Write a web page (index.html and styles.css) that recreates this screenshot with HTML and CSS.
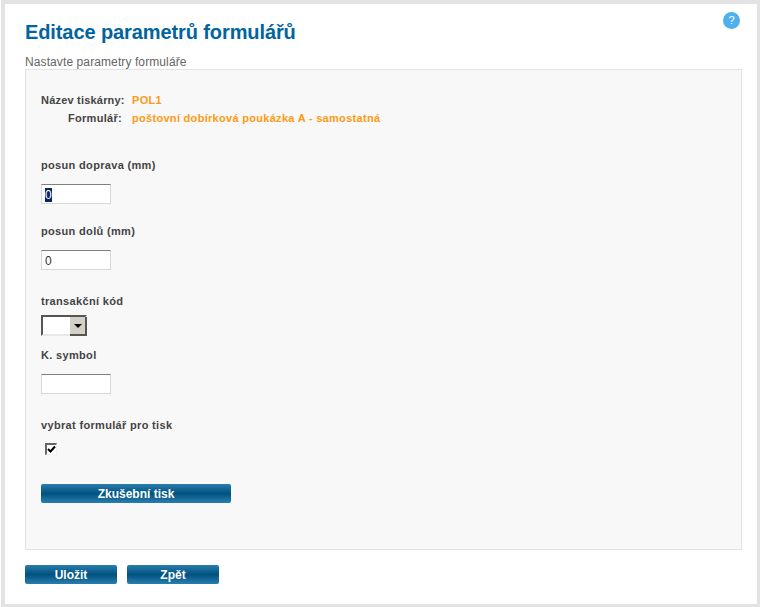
FILE: index.html
```html
<!DOCTYPE html>
<html>
<head>
    <title>Editace parametrů formulářů</title>
    <link rel="stylesheet" href="styles.css">
</head>
<body>
    <div class="frame">
        <div class="help">?</div>
        <h1>Editace parametrů formulářů</h1>
        <p class="subtitle">Nastavte parametry formuláře</p>

        <form class="panel">
            <div class="info">
                <div class="info-label">Název tiskárny:</div>
                <div class="info-value">POL1</div>
                <div class="info-label info-form">Formulář:</div>
                <div class="info-value">poštovní dobírková poukázka A - samostatná</div>
            </div>

            <label class="field-label first">posun doprava (mm)</label>
            <div class="input"><span class="selected">0</span></div>

            <label class="field-label">posun dolů (mm)</label>
            <div class="input">0</div>

            <label class="field-label code">transakční kód</label>
            <div class="select">
                <span class="select-btn"><span class="arrow"></span></span>
            </div>

            <label class="field-label symbol">K. symbol</label>
            <div class="input"></div>

            <label class="field-label last">vybrat formulář pro tisk</label>
            <div class="check">
                <svg width="9" height="9" viewBox="0 0 9 9"><path d="M1 4 L3.5 6.5 L8 1.5" fill="none" stroke="#000" stroke-width="2"/></svg>
            </div>

            <button type="button" class="btn btn-wide">Zkušební tisk</button>
        </form>

        <div class="actions">
            <button type="button" class="btn">Uložit</button>
            <button type="button" class="btn">Zpět</button>
        </div>
    </div>
</body>
</html>
```
FILE: styles.css
```css
html, body {
    margin: 0;
    padding: 0;
    background: #fff;
}

body {
    font-family: "Liberation Sans", Arial, sans-serif;
    font-size: 11px;
    color: #444;
    width: 760px;
    height: 607px;
    overflow: hidden;
}

.frame {
    position: relative;
    box-sizing: border-box;
    width: 759px;
    height: 607px;
    margin-left: 1px;
    padding: 15px 15px 0 20px;
    border: 4px solid #e3e3e3;
    border-right-width: 3px;
    border-bottom-width: 3px;
}

.help {
    position: absolute;
    top: 8px;
    right: 17px;
    width: 17px;
    height: 17px;
    border-radius: 50%;
    background: #4fb0ec;
    color: #fff;
    font-size: 11px;
    line-height: 17px;
    text-align: center;
}

h1 {
    margin: 0;
    font-size: 20px;
    line-height: 26px;
    letter-spacing: -0.1px;
    color: #00649f;
}

.subtitle {
    margin: 10px 0 0;
    font-size: 12px;
    line-height: 14px;
    letter-spacing: 0.1px;
    color: #666;
}

.panel {
    box-sizing: border-box;
    height: 481px;
    padding: 23px 15px 0;
    background: #f8f8f8;
    border: 1px solid #e3e3e3;
}

.info {
    display: grid;
    grid-template-columns: 84px auto;
    column-gap: 7px;
    row-gap: 4px;
    font-weight: bold;
    line-height: 14px;
}

.info-label {
    letter-spacing: 0.2px;
    white-space: nowrap;
    color: #444;
}

.info-form {
    text-align: right;
    padding-right: 3px;
    letter-spacing: 0.3px;
}

.info-value {
    letter-spacing: 0.3px;
    color: #ff9a14;
}

.field-label {
    display: block;
    margin-top: 20px;
    font-weight: bold;
    line-height: 14px;
    letter-spacing: 0.33px;
}

.field-label.first {
    margin-top: 33px;
}

.field-label.code,
.field-label.last {
    margin-top: 24px;
}

.field-label.symbol {
    margin-top: 12px;
}

.input {
    box-sizing: border-box;
    width: 70px;
    height: 20px;
    margin-top: 12px;
    padding-left: 3px;
    background: #fff;
    border: 1px solid #d8d8d8;
    border-top-color: #808080;
    font-size: 12px;
    line-height: 21px;
    color: #333;
}

.selected {
    background: #0a246a;
    color: #fff;
}

.select {
    box-sizing: border-box;
    display: flex;
    justify-content: flex-end;
    width: 46px;
    height: 21px;
    margin-top: 7px;
    background: #fff;
    border: 2px solid #555;
    border-right-color: #e8e8e8;
    border-bottom-color: #e8e8e8;
}

.select-btn {
    display: flex;
    align-items: center;
    justify-content: center;
    width: 15px;
    background: #d4d0c8;
    border: 1px solid #555;
    border-width: 0 2px 2px 0;
    margin: 0 -2px -2px 0;
}

.arrow {
    width: 0;
    height: 0;
    border: 4px solid transparent;
    border-top-color: #000;
    border-bottom-width: 0;
}

.check {
    box-sizing: border-box;
    display: flex;
    align-items: center;
    justify-content: center;
    width: 12px;
    height: 12px;
    margin: 11px 0 0 4px;
    background: #fff;
    border: 1px solid #eee;
    border-top: 2px solid #666;
    border-left: 2px solid #666;
}

.btn {
    display: block;
    width: 92px;
    height: 19px;
    padding: 0;
    border: none;
    border-radius: 2px;
    background: linear-gradient(#2a7eae, #00527f 50%, #2a7eae);
    color: #fff;
    font-family: inherit;
    font-size: 12px;
    font-weight: bold;
}

.btn-wide {
    width: 190px;
    margin-top: 29px;
}

.actions {
    display: flex;
    gap: 10px;
    margin-top: 15px;
}
```
